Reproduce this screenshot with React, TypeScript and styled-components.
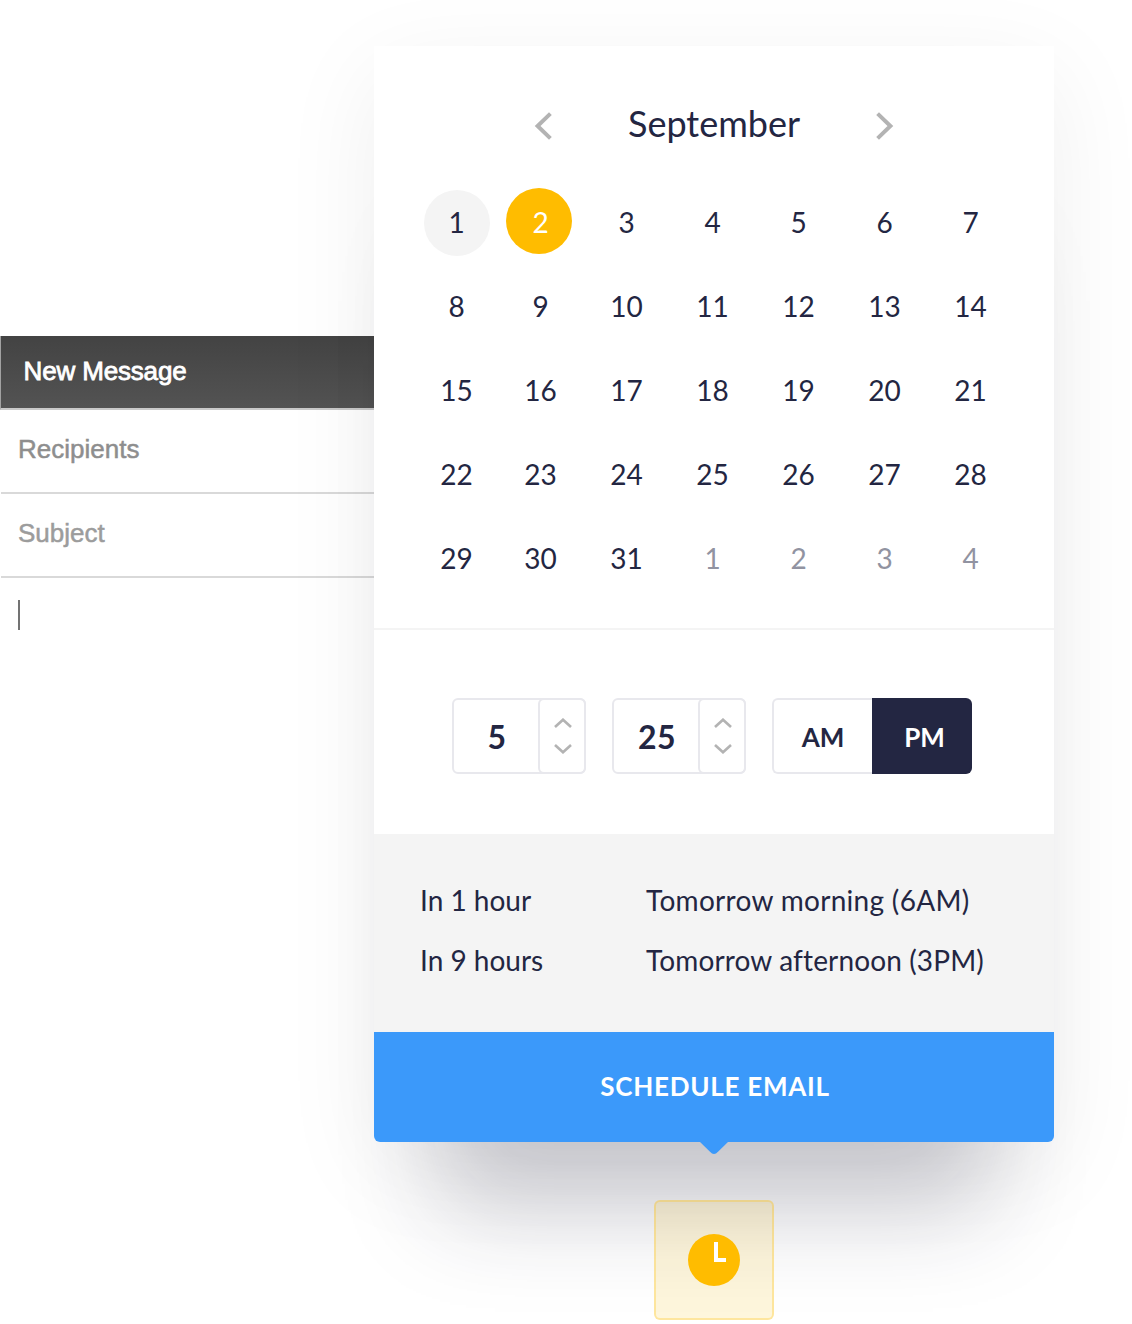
import React, { useState } from "react";
import styled, { createGlobalStyle, css } from "styled-components";

const ink = "#232642";
const amber = "#ffbc00";
const blue = "#3b99fa";
const outline = "#e8e8ed";
const mist = "#f4f4f4";

const GlobalStyle = createGlobalStyle`
  *, *::before, *::after { box-sizing: border-box; }
  body {
    margin: 0;
    background: #fff;
    color: ${ink};
    font-family: Lato, "Open Sans", sans-serif;
  }
  button {
    margin: 0;
    padding: 0;
    border: 0;
    background: none;
    color: inherit;
    font: inherit;
  }
`;

const Stage = styled.main`
  display: flex;
  align-items: flex-start;
  width: 1132px;
  height: 1324px;
  overflow: hidden;
`;

/* Compose window */

const Compose = styled.section`
  width: 374px;
  margin-top: 336px;
  font-family: "Liberation Sans", Arial, sans-serif;
  font-size: 26px;
  line-height: 30px;
`;

const ComposeHeader = styled.header`
  display: flex;
  align-items: center;
  height: 74px;
  padding: 0 0 2px 22.6px;
  border-left: 1px solid #a2a2a2;
  border-bottom: 2px solid #c9c9c9;
  background: linear-gradient(#434343, #535353);
  color: #fff;
  letter-spacing: -0.17px;
  -webkit-text-stroke: 0.8px #fff;
`;

const Field = styled.div<{ $tone: string }>`
  display: flex;
  align-items: center;
  height: 84px;
  margin-left: 1px;
  padding: 0 0 4px 17px;
  border-bottom: 2px solid #d9d9d9;
  color: ${(p) => p.$tone};
  -webkit-text-stroke: 0.5px ${(p) => p.$tone};
`;

const Caret = styled.div`
  width: 2px;
  height: 30px;
  margin: 22px 0 0 18px;
  background: #737373;
`;

/* Scheduler popover */

const SchedulerColumn = styled.div`
  position: relative;
  display: flex;
  flex-direction: column;
  align-items: center;
  width: 680px;
  padding-top: 46px;
`;

const Card = styled.section`
  position: relative;
  width: 680px;
  border-radius: 0 0 6px 6px;
  background: #fff;
  box-shadow:
    0 134px 94px -66px rgba(34, 34, 60, 0.22),
    0 26px 100px rgba(0, 0, 0, 0.065);
`;

const MonthBar = styled.header`
  display: flex;
  align-items: center;
  justify-content: center;
  height: 134px;
  padding-top: 19px;
`;

const MonthName = styled.h1`
  width: 324px;
  margin: 0;
  padding-top: 1px;
  font-size: 36px;
  font-weight: 400;
  line-height: 46px;
  text-align: center;
`;

const ArrowButton = styled.button`
  display: flex;
  margin-top: 7px;
`;

const Days = styled.div`
  display: grid;
  grid-template-columns: 82px repeat(6, 86px);
  grid-auto-rows: 84px;
  height: 448px;
  padding-left: 42px;
`;

type Mark = "today" | "selected" | "outside" | undefined;

const dot = css<{ $mark: Mark }>`
  &::before {
    content: "";
    position: absolute;
    z-index: -1;
    top: ${(p) => (p.$mark === "today" ? 10 : 8)}px;
    left: 8px;
    width: 66px;
    height: 66px;
    border-radius: 50%;
    background: ${(p) => (p.$mark === "today" ? mist : amber)};
  }
`;

const Day = styled.button<{ $mark: Mark }>`
  position: relative;
  z-index: 0;
  padding-right: 1px;
  font-size: 28px;
  line-height: 34px;
  color: ${(p) => (p.$mark === "selected" ? "#fff" : ink)};
  ${(p) => p.$mark === "outside" && "color: #9193a1;"}
  ${(p) => (p.$mark === "today" || p.$mark === "selected") && dot}
`;

const TimeRow = styled.div`
  display: flex;
  align-items: flex-start;
  gap: 26px;
  height: 206px;
  padding: 68px 0 0 78px;
  border-top: 2px solid ${mist};
`;

const NumberBox = styled.div`
  display: flex;
  width: 134px;
  height: 76px;
  border: 2px solid ${outline};
  border-radius: 6px;
`;

const NumberValue = styled.div`
  flex: 1;
  padding-top: 18px;
  font-size: 32px;
  font-weight: 700;
  line-height: 38px;
  letter-spacing: 0.4px;
  text-align: center;
`;

const Steppers = styled.div`
  display: flex;
  flex-direction: column;
  align-items: center;
  justify-content: center;
  gap: 16px;
  width: 48px;
  margin: -2px;
  padding-left: 2px;
  border: 2px solid ${outline};
  border-radius: 6px;
`;

const StepButton = styled.button`
  display: flex;
`;

const Meridiem = styled.div`
  display: flex;
  width: 200px;
  height: 76px;
`;

const MeridiemOption = styled.button<{ $active: boolean }>`
  width: 100px;
  padding-top: 1px;
  border: 2px solid ${(p) => (p.$active ? ink : outline)};
  font-size: 26px;
  font-weight: 700;
  line-height: 32px;
  background: ${(p) => (p.$active ? ink : "#fff")};
  color: ${(p) => (p.$active ? "#fff" : ink)};
  &:first-child {
    border-right: 0;
    border-radius: 6px 0 0 6px;
  }
  &:last-child {
    padding-left: 7px;
    border-left: 0;
    border-radius: 0 6px 6px 0;
  }
`;

const Presets = styled.div`
  display: grid;
  grid-template-columns: 226px 1fr;
  grid-auto-rows: 60px;
  height: 198px;
  padding: 36px 0 0 46px;
  background: ${mist};
`;

const Preset = styled.button<{ $tracking?: number }>`
  font-size: 28px;
  line-height: 34px;
  letter-spacing: ${(p) => p.$tracking ?? 0}px;
  text-align: left;
`;

const SubmitButton = styled.button`
  position: relative;
  display: block;
  width: 680px;
  height: 110px;
  padding: 0 0 2px 2px;
  border-radius: 0 0 6px 6px;
  background: ${blue};
  color: #fff;
  font-size: 26px;
  font-weight: 700;
  letter-spacing: 0.73px;
`;

const Pointer = styled.svg`
  position: absolute;
  top: 109px;
  left: 325px;
`;

const ClockButton = styled.button`
  position: relative;
  display: flex;
  align-items: center;
  justify-content: center;
  width: 120px;
  height: 120px;
  margin-top: 58px;
  border: 2px solid rgba(255, 190, 0, 0.28);
  border-radius: 6px;
  background: rgba(246, 190, 10, 0.14);
`;

const MonthArrow = ({ next }: { next?: boolean }) => (
  <svg width="18" height="28" viewBox="0 0 18 28" fill="none" stroke="#b3b3b3" strokeWidth="4">
    <path d={next ? "M1.6 1.6 14.4 14 1.6 26.4" : "M16.4 1.6 3.6 14 16.4 26.4"} />
  </svg>
);

const StepArrow = ({ down }: { down?: boolean }) => (
  <svg width="18" height="10" viewBox="0 0 18 10" fill="none" stroke="#b3b3b3" strokeWidth="2.6">
    <path d={down ? "M1 1 9 8.3 17 1" : "M1 9 9 1.7 17 9"} />
  </svg>
);

const ClockIcon = () => (
  <svg width="52" height="52" viewBox="0 0 52 52">
    <circle cx="26" cy="26" r="26" fill={amber} />
    <path d="M28 8v18h10" fill="none" stroke="#fff" strokeWidth="4" />
  </svg>
);

const days: { label: number; mark: Mark }[] = Array.from({ length: 35 }, (_, i) => ({
  label: i < 31 ? i + 1 : i - 30,
  mark: i === 0 ? "today" : i > 30 ? "outside" : undefined,
}));

const presets = [
  { text: "In 1 hour" },
  { text: "Tomorrow morning (6AM)", tracking: 0.3 },
  { text: "In 9 hours" },
  { text: "Tomorrow afternoon (3PM)", tracking: 0.14 },
];

function Stepper({ initial, max }: { initial: number; max: number }) {
  const [value, setValue] = useState(initial);
  return (
    <NumberBox>
      <NumberValue>{value}</NumberValue>
      <Steppers>
        <StepButton aria-label="Increase" onClick={() => setValue(Math.min(max, value + 1))}>
          <StepArrow />
        </StepButton>
        <StepButton aria-label="Decrease" onClick={() => setValue(Math.max(0, value - 1))}>
          <StepArrow down />
        </StepButton>
      </Steppers>
    </NumberBox>
  );
}

export default function App() {
  const [selected, setSelected] = useState(1);
  const [meridiem, setMeridiem] = useState("PM");

  return (
    <>
      <GlobalStyle />
      <Stage>
        <Compose>
          <ComposeHeader>New Message</ComposeHeader>
          <Field $tone="#8e8e8e">Recipients</Field>
          <Field $tone="#9c9c9c">Subject</Field>
          <Caret />
        </Compose>
        <SchedulerColumn>
          <Card>
            <MonthBar>
              <ArrowButton aria-label="Previous month">
                <MonthArrow />
              </ArrowButton>
              <MonthName>September</MonthName>
              <ArrowButton aria-label="Next month">
                <MonthArrow next />
              </ArrowButton>
            </MonthBar>
            <Days>
              {days.map((day, i) => (
                <Day key={i} $mark={i === selected ? "selected" : day.mark} onClick={() => setSelected(i)}>
                  {day.label}
                </Day>
              ))}
            </Days>
            <TimeRow>
              <Stepper initial={5} max={12} />
              <Stepper initial={25} max={59} />
              <Meridiem>
                {["AM", "PM"].map((m) => (
                  <MeridiemOption key={m} $active={m === meridiem} onClick={() => setMeridiem(m)}>
                    {m}
                  </MeridiemOption>
                ))}
              </Meridiem>
            </TimeRow>
            <Presets>
              {presets.map((p) => (
                <Preset key={p.text} $tracking={p.tracking}>
                  {p.text}
                </Preset>
              ))}
            </Presets>
            <SubmitButton>
              SCHEDULE EMAIL
              <Pointer width="30" height="14" viewBox="0 0 30 14">
                <path d="M0 0H30L19 10.8Q15 15.2 11 10.8Z" fill={blue} />
              </Pointer>
            </SubmitButton>
          </Card>
          <ClockButton aria-label="Schedule">
            <ClockIcon />
          </ClockButton>
        </SchedulerColumn>
      </Stage>
    </>
  );
}
